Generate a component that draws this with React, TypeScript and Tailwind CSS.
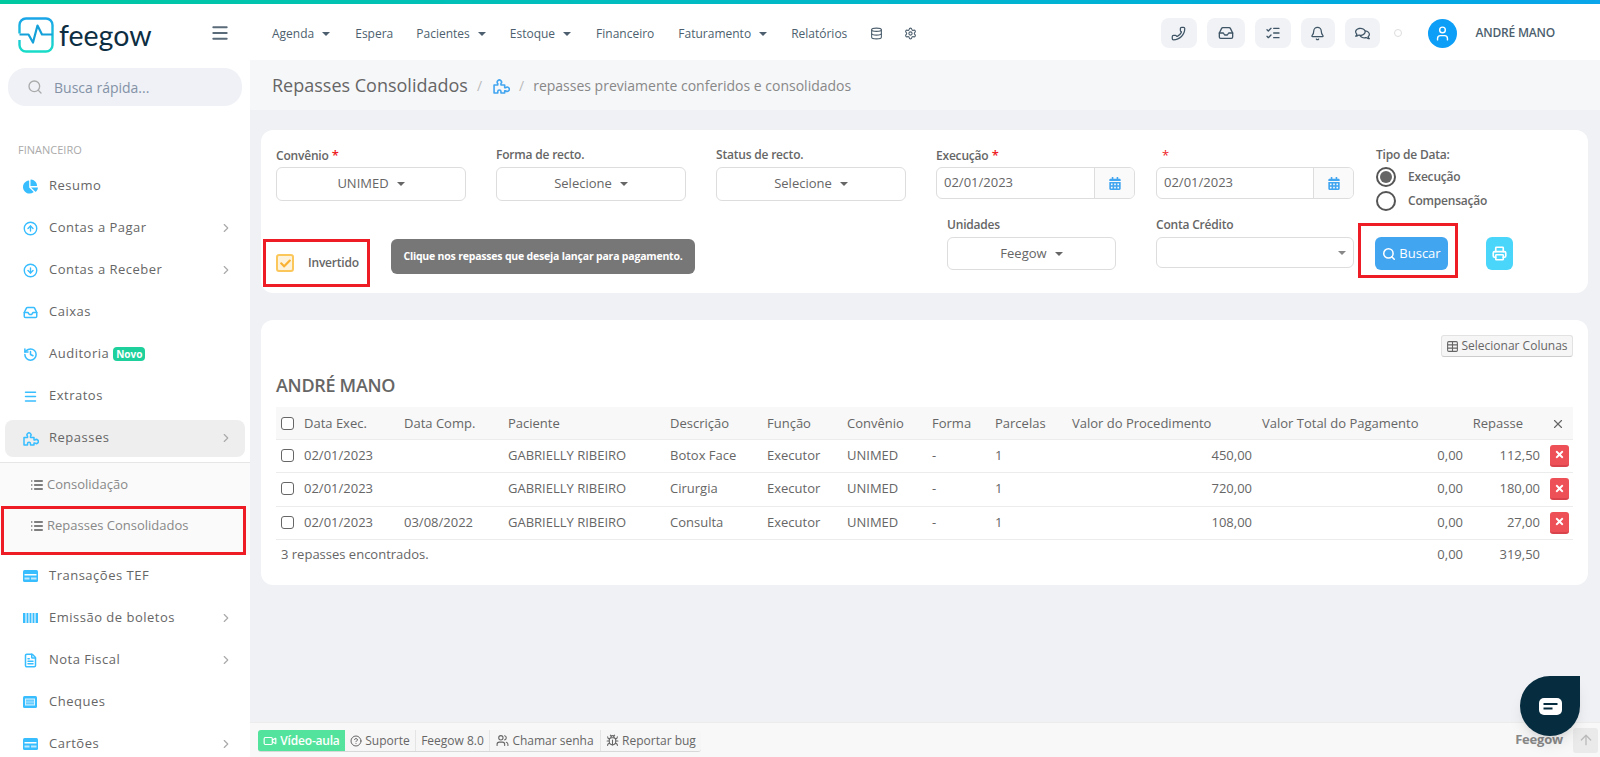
import { useState } from "react";
import {
  ArrowUp,
  Bell,
  Bug,
  ChevronRight,
  CircleArrowDown,
  CircleArrowUp,
  CircleHelp,
  Database,
  FileText,
  History,
  Inbox,
  List,
  ListChecks,
  Menu,
  Phone,
  Printer,
  Search,
  Settings,
  Table,
  User,
  Users,
  Video,
  X,
} from "lucide-react";
import { FaCalendarAlt, FaChartPie, FaCheck, FaRegComments, FaTimes } from "react-icons/fa";

function Caret() {
  return <span className="ml-2 inline-block h-0 w-0 border-x-[4px] border-t-[4px] border-x-transparent border-t-current" />;
}

function Logo() {
  return (
    <svg width="36" height="36" viewBox="0 0 36 36" fill="none">
      <defs>
        <linearGradient id="logo" x1="0" y1="0" x2="0" y2="1">
          <stop offset="0" stopColor="#1aa5e8" />
          <stop offset="1" stopColor="#19dcc8" />
        </linearGradient>
      </defs>
      <path
        d="M1.500 16.500V8A6.500 6.500 0 0 1 8 1.500h20A6.500 6.500 0 0 1 34.500 8v10M34.500 18v10a6.500 6.500 0 0 1-6.500 6.500H8A6.500 6.500 0 0 1 1.500 28v-5"
        stroke="url(#logo)"
        strokeWidth="2.4"
      />
      <path d="M1.500 17.500H10.500L15 25.500 19.500 8.500 24 17.500H34.500" stroke="#14a0d8" strokeWidth="2.200" strokeLinejoin="round" />
    </svg>
  );
}

function PuzzleIcon({ cls }: { cls: string }) {
  return (
    <svg viewBox="0 0 16 16" fill="none" stroke="currentColor" strokeWidth="1.500" strokeLinejoin="round" className={cls}>
      <path d="M1 7.500h3.500v-1.300a2 2 0 1 1 3 0v1.300H11V10h1a2 2 0 1 1 0 3h-1v2H7.500v-1.300a1.500 1.500 0 0 0-3 0V15H1z" />
    </svg>
  );
}

function CardIcon() {
  return (
    <svg width="15" height="12" viewBox="0 0 15 12" className="text-[#38bdff]">
      <rect width="15" height="12" rx="1.500" fill="currentColor" />
      <rect x="1.500" y="4" width="12" height="1.500" fill="#fff" />
      <rect x="1.500" y="7.500" width="5" height="2" fill="#bfe9ff" />
      <rect x="8" y="7.500" width="5.500" height="2" fill="#bfe9ff" />
    </svg>
  );
}

function BarcodeIcon() {
  return (
    <svg width="15" height="10" viewBox="0 0 15 10" className="text-[#38bdff]">
      <rect width="15" height="10" fill="currentColor" opacity="0.45" />
      <rect x="0" width="2" height="10" fill="currentColor" />
      <rect x="4" width="1" height="10" fill="currentColor" />
      <rect x="7" width="1" height="10" fill="currentColor" />
      <rect x="10" width="1" height="10" fill="currentColor" />
      <rect x="13" width="2" height="10" fill="currentColor" />
    </svg>
  );
}

function ChequeIcon() {
  return (
    <svg width="14" height="12" viewBox="0 0 14 12" className="text-[#38bdff]">
      <rect width="14" height="12" rx="1.500" fill="currentColor" />
      <rect x="2" y="2.500" width="10" height="7" fill="#d8f2ff" />
      <path d="M3 4.200h8M3 6h8M3 7.800h8" stroke="#38bdff" strokeWidth="1" />
    </svg>
  );
}

const iconCls = "h-[15px] w-[15px] text-[#38bdff]";

const sideTop = [
  { label: "Resumo", icon: <FaChartPie className={iconCls} /> },
  { label: "Contas a Pagar", icon: <CircleArrowUp className={iconCls} strokeWidth={2.2} />, arrow: true },
  { label: "Contas a Receber", icon: <CircleArrowDown className={iconCls} strokeWidth={2.2} />, arrow: true },
  { label: "Caixas", icon: <Inbox className={iconCls} strokeWidth={2.4} /> },
  { label: "Auditoria", icon: <History className={iconCls} strokeWidth={2.4} />, badge: true },
  { label: "Extratos", icon: <Menu className={iconCls} strokeWidth={2.4} /> },
];

const sideBottom = [
  { label: "Transações TEF", icon: <CardIcon /> },
  { label: "Emissão de boletos", icon: <BarcodeIcon />, arrow: true },
  { label: "Nota Fiscal", icon: <FileText className={iconCls} strokeWidth={2.4} />, arrow: true },
  { label: "Cheques", icon: <ChequeIcon /> },
  { label: "Cartões", icon: <CardIcon />, arrow: true },
];

function SideItem({ label, icon, arrow, badge }: { label: string; icon: React.ReactNode; arrow?: boolean; badge?: boolean }) {
  return (
    <div className="flex h-[42px] items-center pl-[23px] pr-[17px] text-[13px] tracking-[0.5px] text-[#666]">
      <span className="flex w-[26px] shrink-0 items-center">{icon}</span>
      <span>{label}</span>
      {badge && (
        <span className="ml-1 rounded-[4px] bg-[#1ed09c] px-[3px] text-[10px] leading-[14px] font-bold tracking-normal text-white">Novo</span>
      )}
      {arrow && <ChevronRight className="ml-auto h-[14px] w-[14px] text-[#aaa]" />}
    </div>
  );
}

function Sidebar() {
  return (
    <aside className="h-full w-[250px] shrink-0 overflow-hidden bg-white">
      <div className="flex h-[56px] items-center pl-[18px] pt-[6px]">
        <Logo />
        <span className="ml-[5px] font-['Lato'] text-[28.5px] leading-none text-[#0d2e42]">feegow</span>
        <Menu className="ml-[58px] -mt-[4px] h-[20px] w-[20px] text-[#5a6b79]" strokeWidth={2.4} />
      </div>
      <div className="mx-2 mt-2 flex h-[38px] items-center rounded-[18px] bg-[#eff1f6] pl-[19px] text-[14px] text-[#8492a6]">
        <Search className="h-[16px] w-[16px] text-[#aaa]" />
        <span className="ml-[11px]">Busca rápida...</span>
      </div>
      <div className="mt-[34px] h-[20px] pl-[18px] text-[11px] leading-[20px] text-[#aaa]">FINANCEIRO</div>
      <div className="mt-[5px]">
        {sideTop.map((it) => (
          <SideItem key={it.label} {...it} />
        ))}
        <div className="flex h-[42px] items-center">
          <div className="mx-[5px] flex h-[37px] w-[240px] items-center rounded-lg bg-[#eeeeee] pl-[18px] pr-[12px] text-[13px] tracking-[0.5px] text-[#666]">
            <span className="flex w-[26px] items-center">
              <PuzzleIcon cls="h-[16px] w-[16px] text-[#38bdff]" />
            </span>
            <span>Repasses</span>
            <ChevronRight className="ml-auto h-[14px] w-[14px] text-[#aaa]" />
          </div>
        </div>
        <div className="mt-[3px] border-t border-[#e6e6e6] bg-[#fafafa] text-[13px] text-[#888]">
          <div className="flex h-[43px] items-center pl-[30px]">
            <List className="mr-[3px] h-[14px] w-[14px] text-[#555]" strokeWidth={2.6} />
            Consolidação
          </div>
          <div className="ml-[1px] flex h-[49px] w-[245px] items-start border-[3px] border-[#ee1c25] pl-[26px] pt-[7px]">
            <List className="mr-[3px] mt-[3px] h-[14px] w-[14px] text-[#555]" strokeWidth={2.6} />
            Repasses Consolidados
          </div>
        </div>
        {sideBottom.map((it) => (
          <SideItem key={it.label} {...it} />
        ))}
      </div>
    </aside>
  );
}

const navItems = [
  { label: "Agenda", caret: true, ml: "ml-0" },
  { label: "Espera", ml: "ml-[25px]" },
  { label: "Pacientes", caret: true, ml: "ml-[23px]" },
  { label: "Estoque", caret: true, ml: "ml-[24px]" },
  { label: "Financeiro", ml: "ml-[25px]" },
  { label: "Faturamento", caret: true, ml: "ml-[24px]" },
  { label: "Relatórios", ml: "ml-[24px]" },
];

const topBtns = [
  { w: "w-[36px]", ml: "ml-0", icon: <Phone className="h-[15px] w-[15px] -scale-x-100" /> },
  { w: "w-[38px]", ml: "ml-[10px]", icon: <Inbox className="h-[16px] w-[16px]" /> },
  { w: "w-[36px]", ml: "ml-[10px]", icon: <ListChecks className="h-[16px] w-[16px]" /> },
  { w: "w-[34px]", ml: "ml-[10px]", icon: <Bell className="h-[15px] w-[15px]" /> },
  { w: "w-[35px]", ml: "ml-[10px]", icon: <FaRegComments className="h-[15px] w-[15px]" /> },
];

function Header() {
  return (
    <header className="flex h-[56px] shrink-0 items-center bg-white pl-[22px] pt-[2px] text-[12px] text-[#4d5f6e]">
      {navItems.map((n) => (
        <span key={n.label} className={`mt-[2px] flex items-center ${n.ml}`}>
          {n.label}
          {n.caret && <Caret />}
        </span>
      ))}
      <Database className="ml-[23px] h-[13px] w-[13px]" />
      <Settings className="ml-[21px] h-[13px] w-[13px]" />
      <div className="ml-auto flex items-center pr-[45px]">
        {topBtns.map((b, i) => (
          <div key={i} className={`flex h-[30px] items-center justify-center rounded-lg bg-[#f0f2f6] text-[#3f5566] ${b.w} ${b.ml}`}>
            {b.icon}
          </div>
        ))}
        <span className="ml-[14px] h-[8px] w-[8px] rounded-full border border-[#dddddd]" />
        <span className="ml-[26px] flex h-[29px] w-[29px] items-center justify-center rounded-full bg-[#0d9ef7] text-white">
          <User className="h-[17px] w-[17px]" />
        </span>
        <span className="ml-[19px] font-semibold tracking-[-0.2px] text-[#4d5f6e]">ANDRÉ MANO</span>
      </div>
    </header>
  );
}

function Field({ label, req }: { label: string; req?: boolean }) {
  return (
    <div className="h-[20px] text-[12px] leading-[20px] font-semibold tracking-[-0.2px] text-[#666]">
      {label}
      {req && <span className="text-[13px] text-[#ee1c25]"> *</span>}
    </div>
  );
}

function SelectBox({ label, cls }: { label: string; cls: string }) {
  return (
    <div className={`flex items-center justify-center rounded-md border border-[#dddddd] bg-white text-[13px] text-[#666] ${cls}`}>
      {label}
      <Caret />
    </div>
  );
}

function DateBox() {
  return (
    <div className="mt-[2px] flex h-[32px] overflow-hidden rounded-md border border-[#dddddd] bg-white text-[13px] text-[#666]">
      <span className="flex flex-1 items-center pl-[7px]">02/01/2023</span>
      <span className="flex w-[40px] items-center justify-center border-l border-[#dddddd] bg-[#fafafa] text-[#42a5f0]">
        <FaCalendarAlt className="h-[13px] w-[12px]" />
      </span>
    </div>
  );
}

function Filters() {
  const [inverted] = useState(true);
  return (
    <section className="ml-[11px] mr-[12px] mt-[20px] rounded-xl bg-white pt-[15px] pb-[6px]">
      <div className="flex h-[78px] pl-[15px]">
        <div className="w-[190px]">
          <Field label="Convênio" req />
          <SelectBox label="UNIMED" cls="mt-[2px] h-[34px]" />
        </div>
        <div className="ml-[30px] w-[190px]">
          <Field label="Forma de recto." />
          <SelectBox label="Selecione" cls="mt-[2px] h-[34px]" />
        </div>
        <div className="ml-[30px] w-[190px]">
          <Field label="Status de recto." />
          <SelectBox label="Selecione" cls="mt-[2px] h-[34px]" />
        </div>
        <div className="ml-[30px] w-[199px]">
          <Field label="Execução" req />
          <DateBox />
        </div>
        <div className="ml-[21px] w-[198px]">
          <div className="h-[20px] pl-[6px] text-[13px] leading-[20px] text-[#ee1c25]">*</div>
          <DateBox />
        </div>
        <div className="ml-[22px] text-[12px] tracking-[-0.2px] text-[#666]">
          <Field label="Tipo de Data:" />
          <div className="flex h-[24px] items-center">
            <span className="flex h-[20px] w-[20px] items-center justify-center rounded-full border-2 border-[#555]">
              <span className="h-[12px] w-[12px] rounded-full bg-[#666]" />
            </span>
            <span className="ml-[12px] font-semibold">Execução</span>
          </div>
          <div className="flex h-[24px] items-center">
            <span className="h-[20px] w-[20px] rounded-full border-2 border-[#555]" />
            <span className="ml-[12px] font-semibold">Compensação</span>
          </div>
        </div>
      </div>
      <div className="flex items-start">
        <div className="ml-[2px] mt-[16px] flex h-[48px] w-[107px] items-center border-[3px] border-[#ee1c25] pl-[10px]">
          <span className="flex h-[18px] w-[18px] items-center justify-center rounded-[3px] border-2 border-[#fcc75a] bg-[#fdf3dc] text-[#f9b233]">
            {inverted && <FaCheck className="h-[11px] w-[11px]" />}
          </span>
          <span className="ml-[14px] text-[12px] font-semibold tracking-[-0.2px] text-[#666]">Invertido</span>
        </div>
        <div className="ml-[21px] mt-[16px] flex h-[35px] w-[304px] items-center justify-center rounded-md bg-[#777777] text-[10.5px] font-bold tracking-[-0.2px] whitespace-nowrap text-white">
          Clique nos repasses que deseja lançar para pagamento.
        </div>
        <div className="ml-[252px] -mt-[8px] w-[169px]">
          <Field label="Unidades" />
          <SelectBox label="Feegow" cls="mt-[2px] h-[33px]" />
        </div>
        <div className="ml-[40px] -mt-[8px] w-[198px]">
          <Field label="Conta Crédito" />
          <div className="mt-[2px] flex h-[31px] items-center justify-end rounded-md border border-[#dddddd] bg-white pr-[7px] text-[#888]">
            <Caret />
          </div>
        </div>
        <div className="ml-[4px] h-[55px] w-[100px] border-[3px] border-[#ee1c25] pl-[14px] pt-[11px]">
          <div className="flex h-[33px] w-[73px] items-center justify-center rounded-md bg-[#42a5f0] text-[13px] text-white">
            <Search className="mr-[3px] h-[14px] w-[14px]" strokeWidth={2.6} />
            Buscar
          </div>
        </div>
        <div className="ml-[28px] mt-[14px] flex h-[33px] w-[27px] items-center justify-center rounded-md bg-[#4ad6fa] text-white">
          <Printer className="h-[15px] w-[15px]" strokeWidth={2.6} />
        </div>
      </div>
    </section>
  );
}

const colWidths = ["w-[123px]", "w-[104px]", "w-[162px]", "w-[97px]", "w-[80px]", "w-[85px]", "w-[63px]", "w-[77px]", "w-[190px]", "w-[210px]", "w-[80px]", "w-[26px]"];

const rows = [
  { comp: "", desc: "Botox Face", valor: "450,00", repasse: "112,50", h: "h-[33px]" },
  { comp: "", desc: "Cirurgia", valor: "720,00", repasse: "180,00", h: "h-[34px]" },
  { comp: "03/08/2022", desc: "Consulta", valor: "108,00", repasse: "27,00", h: "h-[33px]" },
];

function Check() {
  return <span className="mr-[10px] inline-block h-[13px] w-[13px] rounded-[3px] border border-[#666] bg-white align-[-2px]" />;
}

function Results() {
  return (
    <section className="ml-[11px] mr-[12px] mt-[27px] rounded-xl bg-white px-[15px] pt-[15px] pb-[15px]">
      <div className="flex justify-end">
        <div className="flex h-[22px] w-[132px] items-center justify-center rounded-[3px] border border-[#e2e2e2] border-b-[#cccccc] bg-[#f6f6f6] text-[12px] text-[#666]">
          <Table className="mr-[2px] h-[13px] w-[13px]" />
          Selecionar Colunas
        </div>
      </div>
      <h2 className="flex h-[50px] items-center pt-[6px] text-[18px] font-semibold tracking-[-0.3px] text-[#666]">ANDRÉ MANO</h2>
      <table className="w-[1297px] table-fixed border-collapse text-[13px] text-[#666]">
        <colgroup>
          {colWidths.map((w, i) => (
            <col key={i} className={w} />
          ))}
        </colgroup>
        <thead>
          <tr className="h-[32px] border-b border-[#ececec] bg-[#f8f8f8] text-left">
            <th className="pl-[5px] pt-[2px] font-normal">
              <Check />
              Data Exec.
            </th>
            <th className="pl-[5px] pt-[2px] font-normal">Data Comp.</th>
            <th className="pl-[5px] pt-[2px] font-normal">Paciente</th>
            <th className="pl-[5px] pt-[2px] font-normal">Descrição</th>
            <th className="pl-[5px] pt-[2px] font-normal">Função</th>
            <th className="pl-[5px] pt-[2px] font-normal">Convênio</th>
            <th className="pl-[5px] pt-[2px] font-normal">Forma</th>
            <th className="pl-[5px] pt-[2px] font-normal">Parcelas</th>
            <th className="pl-[5px] pt-[2px] font-normal">Valor do Procedimento</th>
            <th className="pl-[5px] pt-[2px] font-normal">Valor Total do Pagamento</th>
            <th className="pr-[24px] pt-[2px] text-right font-normal">Repasse</th>
            <th className="pr-[4px] text-center">
              <X className="inline h-[14px] w-[14px]" />
            </th>
          </tr>
        </thead>
        <tbody>
          {rows.map((r) => (
            <tr key={r.repasse} className={`border-b border-[#ececec] ${r.h}`}>
              <td className="pl-[5px]">
                <Check />
                02/01/2023
              </td>
              <td className="pl-[5px]">{r.comp}</td>
              <td className="pl-[5px]">GABRIELLY RIBEIRO</td>
              <td className="pl-[5px]">{r.desc}</td>
              <td className="pl-[5px]">Executor</td>
              <td className="pl-[5px]">UNIMED</td>
              <td className="pl-[5px]">-</td>
              <td className="pl-[5px]">1</td>
              <td className="pr-[5px] text-right">{r.valor}</td>
              <td className="pr-[4px] text-right">0,00</td>
              <td className="pr-[7px] text-right">{r.repasse}</td>
              <td>
                <span className="ml-[3px] flex h-[22px] w-[19px] items-center justify-center rounded-[3px] border-b-2 border-[#d9434b] bg-[#ee5058] text-white">
                  <FaTimes className="h-[11px] w-[11px]" />
                </span>
              </td>
            </tr>
          ))}
          <tr className="h-[31px]">
            <td colSpan={9} className="pl-[5px]">
              3 repasses encontrados.
            </td>
            <td className="pr-[4px] text-right">0,00</td>
            <td className="pr-[7px] text-right">319,50</td>
            <td />
          </tr>
        </tbody>
      </table>
    </section>
  );
}

function Footer() {
  const cell = "flex h-full items-center justify-center border-r border-[#e4e4e4]";
  return (
    <footer className="flex h-[35px] shrink-0 items-center border-t border-[#ececec] bg-[#f8f8f8] pl-[8px] text-[12px] text-[#666]">
      <div className="mt-[2px] flex h-[22px] overflow-hidden rounded-[3px] border-b border-[#d8d8d8] bg-[#f6f6f6]">
        <span className="flex w-[87px] items-center justify-center bg-[#54e39c] font-semibold tracking-[-0.2px] text-white">
          <Video className="mr-[3px] h-[14px] w-[14px]" />
          Vídeo-aula
        </span>
        <span className={`${cell} w-[71px]`}>
          <CircleHelp className="mr-[3px] h-[12px] w-[12px]" />
          Suporte
        </span>
        <span className={`${cell} w-[74px]`}>Feegow 8.0</span>
        <span className={`${cell} w-[111px]`}>
          <Users className="mr-[3px] h-[13px] w-[13px]" />
          Chamar senha
        </span>
        <span className="flex w-[100px] items-center justify-center">
          <Bug className="mr-[3px] h-[13px] w-[13px]" />
          Reportar bug
        </span>
      </div>
      <span className="ml-auto text-[13px] font-bold tracking-[-0.2px] text-[#888]">Feegow</span>
      <span className="ml-[10px] mr-[2px] flex h-[25px] w-[25px] items-center justify-center rounded-[3px] bg-[#eaeaea] text-[#bbb]">
        <ArrowUp className="h-[16px] w-[16px]" />
      </span>
    </footer>
  );
}

export default function App() {
  return (
    <div className="relative flex h-[757px] w-[1600px] flex-col overflow-hidden bg-[#eff1f5] font-['Open_Sans',sans-serif]">
      <div className="h-[4px] shrink-0 bg-gradient-to-r from-[#00c9a0] to-[#0aa5ea]" />
      <div className="flex min-h-0 flex-1">
        <Sidebar />
        <div className="flex min-w-0 flex-1 flex-col">
          <Header />
          <div className="flex h-[50px] shrink-0 items-center bg-[#f6f7f9] pl-[22px]">
            <span className="text-[18px] text-[#666]">Repasses Consolidados</span>
            <span className="ml-[9px] text-[14px] text-[#bbb]">/</span>
            <PuzzleIcon cls="ml-[11px] h-[17px] w-[17px] text-[#42a5f0]" />
            <span className="ml-[9px] text-[14px] text-[#bbb]">/</span>
            <span className="ml-[9px] text-[14px] text-[#888]">repasses previamente conferidos e consolidados</span>
          </div>
          <div className="min-h-0 flex-1">
            <Filters />
            <Results />
          </div>
          <Footer />
        </div>
      </div>
      <div className="absolute left-[1520px] top-[676px] flex h-[60px] w-[60px] items-center justify-center rounded-full rounded-tr-[8px] bg-[#062c3f] shadow-lg">
        <svg width="23" height="17" viewBox="0 0 23 17">
          <rect width="23" height="17" rx="5" fill="#fff" />
          <path d="M4.500 6h14M4.500 10.500h9" stroke="#062c3f" strokeWidth="2" />
        </svg>
      </div>
    </div>
  );
}
